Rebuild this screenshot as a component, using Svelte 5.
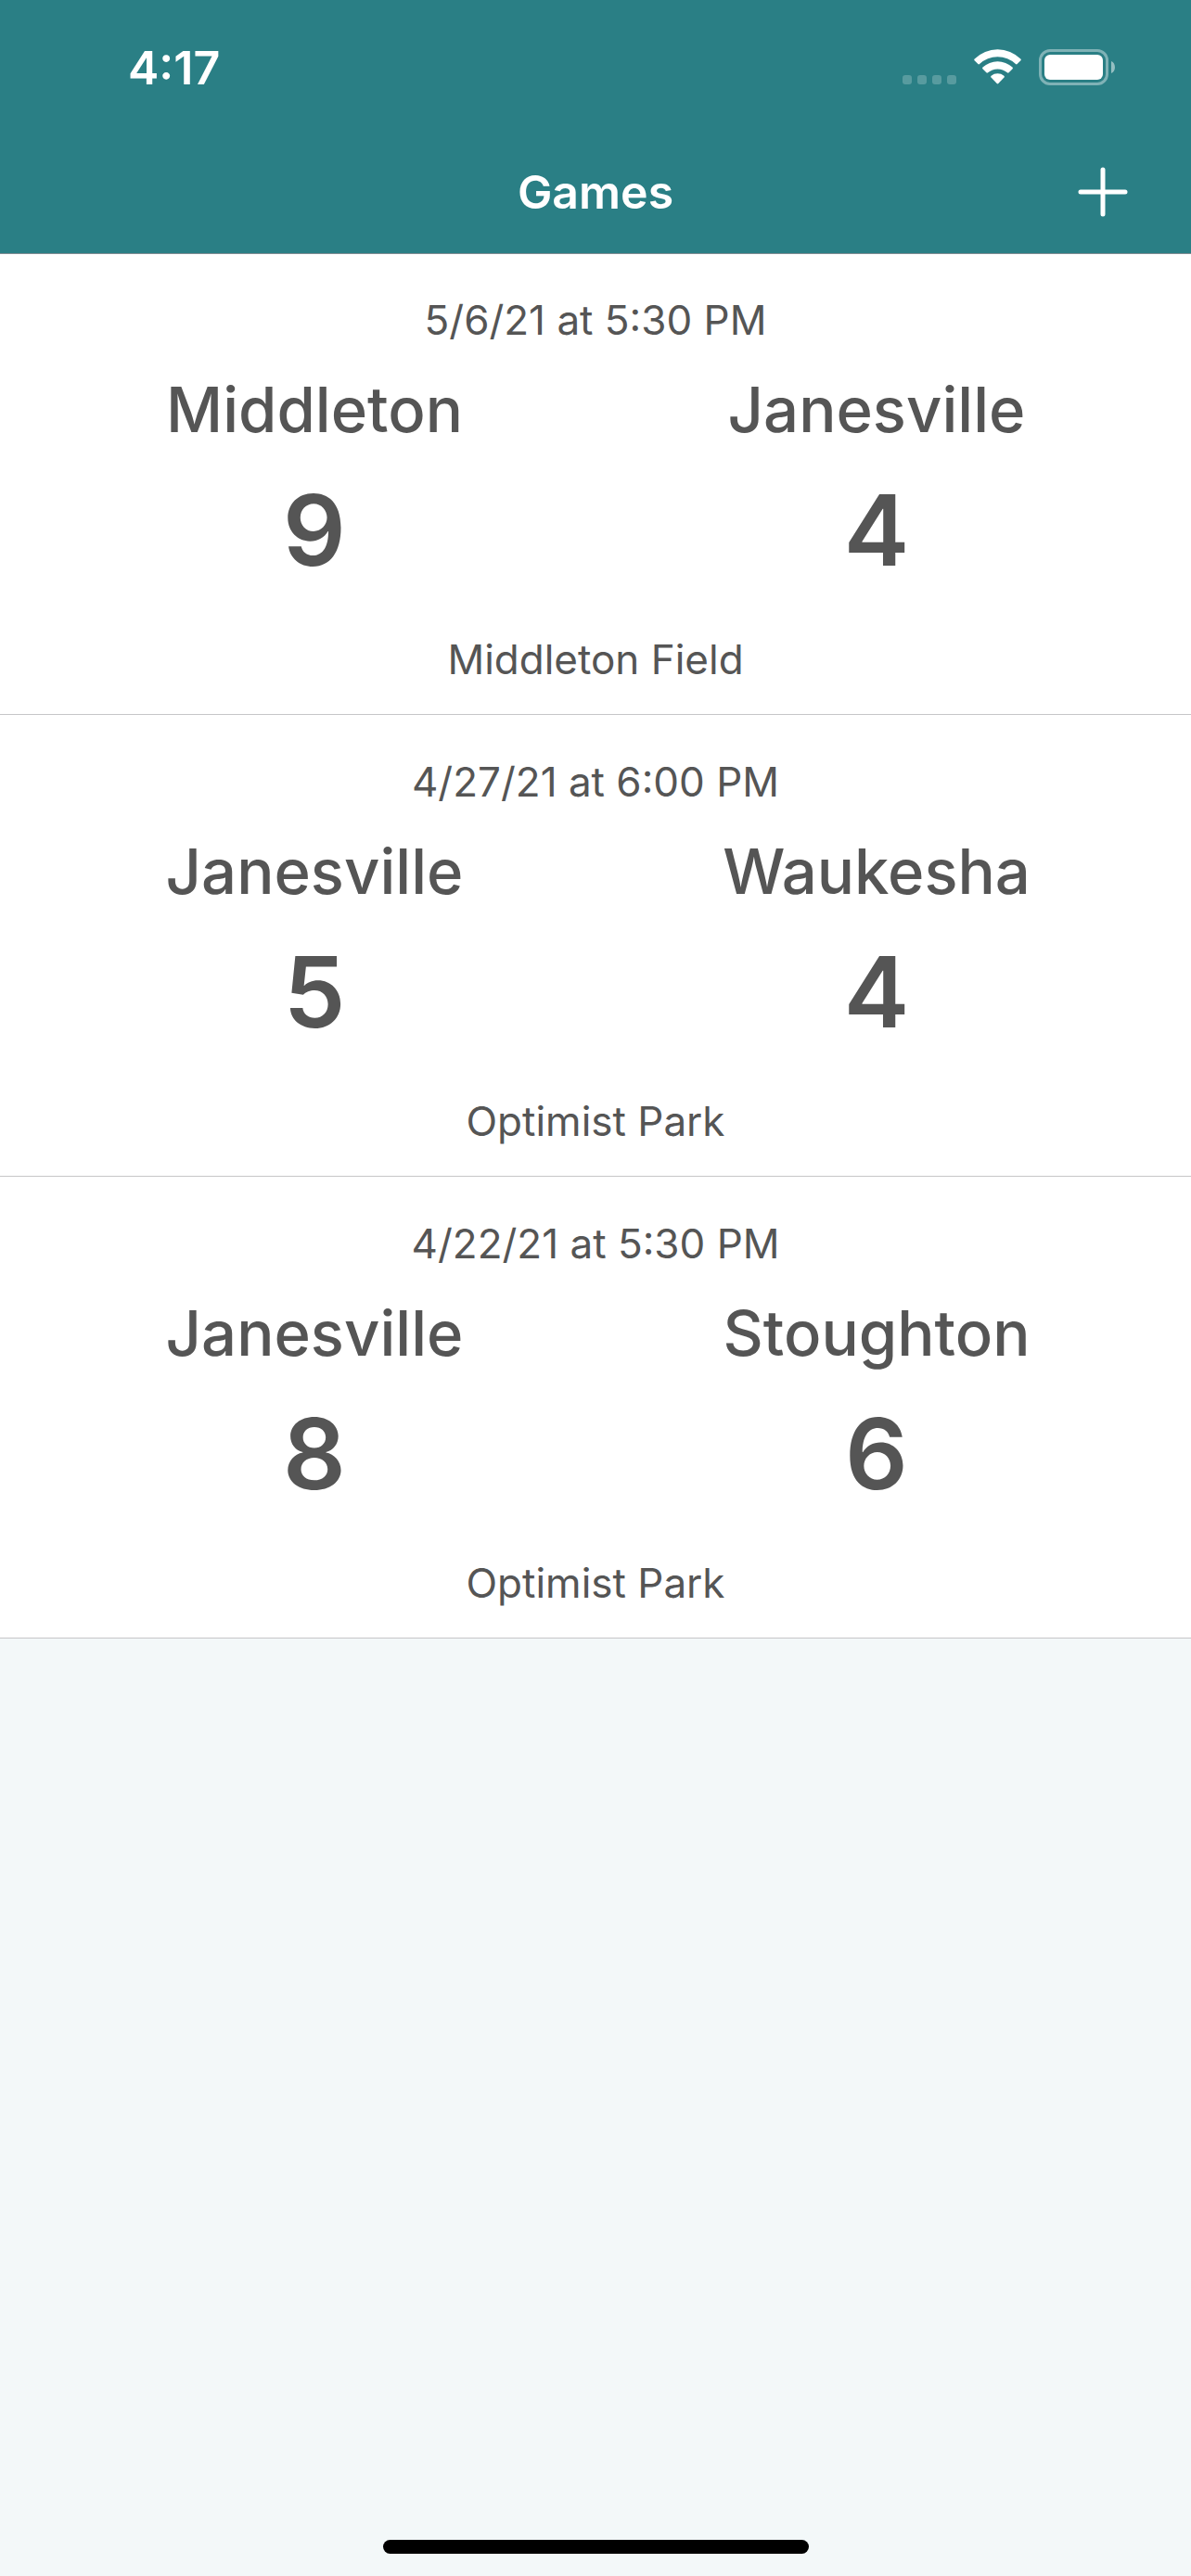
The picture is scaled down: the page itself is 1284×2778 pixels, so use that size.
<script>
  const games = [
    {
      when: '5/6/21 at 5:30 PM',
      teams: [{ name: 'Middleton', score: 9 }, { name: 'Janesville', score: 4 }],
      venue: 'Middleton Field'
    },
    {
      when: '4/27/21 at 6:00 PM',
      teams: [{ name: 'Janesville', score: 5 }, { name: 'Waukesha', score: 4 }],
      venue: 'Optimist Park'
    },
    {
      when: '4/22/21 at 5:30 PM',
      teams: [{ name: 'Janesville', score: 8 }, { name: 'Stoughton', score: 6 }],
      venue: 'Optimist Park'
    }
  ];
</script>

<div class="screen">
  <header>
    <div class="status">
      <span class="time">4:17</span>
      <svg class="indicators" width="230" height="40" viewBox="0 0 230 40" role="img" aria-label="No signal, Wi-Fi connected, battery full">
        <g fill="#fff" fill-opacity=".22">
          <rect x="0" y="28" width="10" height="10" rx="3" />
          <rect x="16" y="28" width="10" height="10" rx="3" />
          <rect x="32" y="28" width="10" height="10" rx="3" />
          <rect x="48" y="28" width="10" height="10" rx="3" />
        </g>
        <g fill="#fff">
          <path d="M77.6 12.2Q76.8 11.4 77.7 10.5A35.2 35.2 0 0 1 127.3 10.5Q128.2 11.4 127.4 12.2L123.6 16.1Q122.8 16.8 122 16A28.4 28.4 0 0 0 83 16Q82.2 16.8 81.4 16.1Z" />
          <path d="M86.4 21.3Q85.6 20.5 86.5 19.6A23.4 23.4 0 0 1 118.5 19.6Q119.4 20.5 118.6 21.3L114.6 25.3Q113.8 26 112.9 25.2A16.2 16.2 0 0 0 92.1 25.2Q91.2 26 90.4 25.3Z" />
          <path d="M95.5 30.5Q94.7 29.6 95.6 28.8A11 11 0 0 1 109.4 28.8Q110.3 29.6 109.5 30.5L103.3 37Q102.5 37.8 101.7 37Z" />
        </g>
        <rect x="148.5" y="1.5" width="72" height="36" rx="10.5" fill="none" stroke="#fff" stroke-opacity=".4" stroke-width="3" />
        <rect x="153" y="6" width="63" height="27" rx="6" fill="#fff" />
        <path d="M225 13C230.300 15 230.300 24 225 26Z" fill="#fff" fill-opacity=".5" />
      </svg>
    </div>
    <nav>
      <h1>Games</h1>
      <button type="button" aria-label="Add game">
        <svg width="54" height="54" viewBox="0 0 54 54" aria-hidden="true">
          <path d="M27 3V51M3 27H51" fill="none" stroke="#fff" stroke-width="5" stroke-linecap="round" />
        </svg>
      </button>
    </nav>
  </header>

  <main>
    <ul>
      {#each games as game}
        <li>
          <p class="detail">{game.when}</p>
          <div class="teams">
            {#each game.teams as team}
              <div class="team">
                <h2>{team.name}</h2>
                <p class="score">{team.score}</p>
              </div>
            {/each}
          </div>
          <p class="detail">{game.venue}</p>
        </li>
      {/each}
    </ul>
  </main>

  <footer><div class="home"></div></footer>
</div>

<style>
  :global(body) {
    background: #f3f8f9;
  }
  .screen {
    display: flex;
    flex-direction: column;
    min-height: 100vh;
    color: #555;
    font-family: Inter, 'Liberation Sans', sans-serif;
  }
  h1, h2, p, ul {
    margin: 0;
    padding: 0;
  }
  /* The hairline under the header is drawn over the first row. */
  header {
    position: relative;
    background: #2a7f85;
    box-shadow: 0 1px #7f8d92;
    color: #fff;
  }
  .status {
    display: flex;
    align-items: center;
    justify-content: space-between;
    box-sizing: border-box;
    height: 141px;
    padding: 5px 81px 0 138px;
  }
  .time, h1 {
    font-size: 50px;
    font-weight: 600;
    line-height: 60px;
  }
  .indicators, button svg {
    display: block;
  }
  nav {
    display: grid;
    grid-template-columns: 1fr auto 1fr;
    align-items: center;
    height: 132px;
    padding: 0 48px;
  }
  h1 {
    grid-column: 2;
  }
  button {
    justify-self: end;
    padding: 20px;
    border: 0;
    background: none;
    cursor: pointer;
  }
  main {
    flex: 1;
  }
  ul {
    list-style: none;
  }
  li {
    padding: 45px 36px 32px;
    border-bottom: 1px solid #c6c6c8;
    background: #fff;
    text-align: center;
  }
  .detail {
    font-size: 44px;
    line-height: 54px;
  }
  .teams {
    display: grid;
    grid-template-columns: 1fr 1fr;
    margin: 28px 0 48px;
  }
  .team {
    display: grid;
    gap: 24px;
  }
  h2 {
    font-size: 67px;
    font-weight: 500;
    line-height: 84px;
  }
  .score {
    font-size: 106px;
    font-weight: 600;
    line-height: 128px;
  }
  footer {
    display: flex;
    justify-content: center;
    padding-bottom: 24px;
  }
  .home {
    width: 459px;
    max-width: 60%;
    height: 15px;
    border-radius: 8px;
    background: #000;
  }
</style>
